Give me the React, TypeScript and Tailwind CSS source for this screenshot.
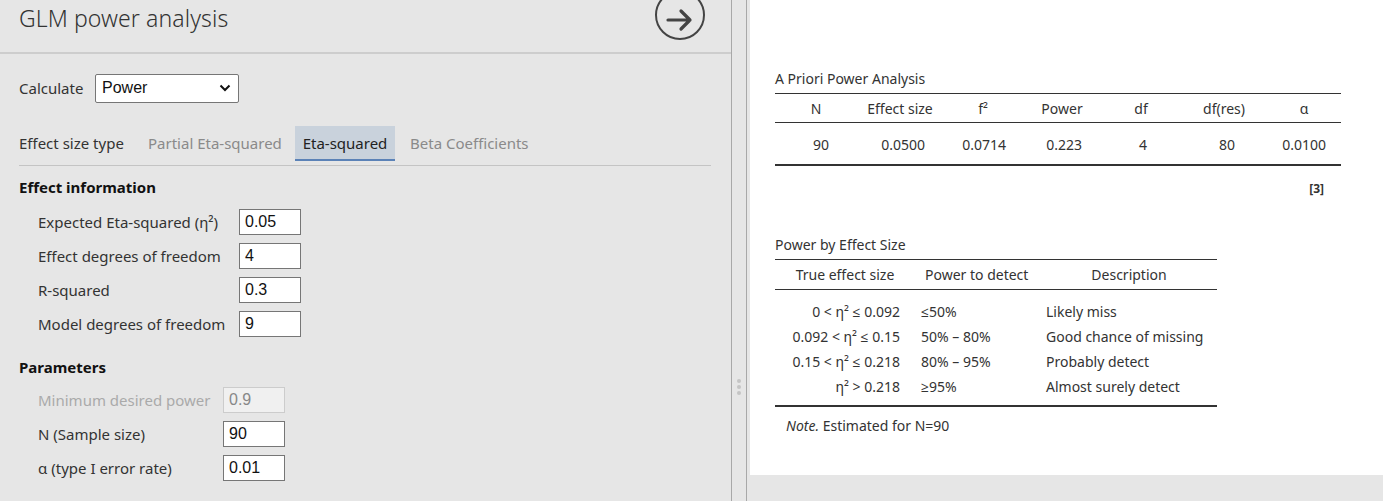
import React from "react";

const ui = { fontFamily: '"Noto Sans", "Open Sans", sans-serif' };
const arial = { fontFamily: '"Liberation Sans", Arial, sans-serif' };

function Field({ label, value, inputLeft, disabled }: { label: string; value: string; inputLeft: number; disabled?: boolean }) {
  return (
    <div className="flex items-center h-[34px] pl-[38px]">
      <div className={`text-[15px] ${disabled ? "text-[#aaaaaa]" : "text-[#333333]"}`} style={{ width: inputLeft - 38 }}>
        {label}
      </div>
      <div
        className={`w-[62px] h-[26px] border pl-[5px] text-[16px] leading-[24px] ${disabled ? "bg-[#f0f0f0] border-[#cccccc] text-[#888888]" : "bg-white border-[#767676] text-[#111111]"}`}
        style={arial}
      >
        {value}
      </div>
    </div>
  );
}

export default function App() {
  const headers = ["N", "Effect size", "f²", "Power", "df", "df(res)", "α"];
  const vals = ["90", "0.0500", "0.0714", "0.223", "4", "80", "0.0100"];
  const colW = [82, 86, 80, 78, 80, 86, 74];
  const valPad = [28, 18, 17, 19, 34, 32, 15];
  const rows = [
    ["0 < η² ≤ 0.092", "≤50%", "Likely miss"],
    ["0.092 < η² ≤ 0.15", "50% – 80%", "Good chance of missing"],
    ["0.15 < η² ≤ 0.218", "80% – 95%", "Probably detect"],
    ["η² > 0.218", "≥95%", "Almost surely detect"],
  ];
  return (
    <div className="flex w-[1383px] h-[501px] bg-[#e6e6e6] overflow-hidden" style={ui}>
      {/* Left options panel */}
      <div className="w-[732px] h-full border-r border-[#a8a8a8] flex flex-col shrink-0">
        <div className="relative h-[54px] border-b-2 border-[#cdcdcd] flex items-start">
          <div className="pl-[19px] pt-[1px] text-[23px] text-[#333333] font-light tracking-[0.1px]">GLM power analysis</div>
          <div className="absolute left-[655px] top-[-10px] w-[50px] h-[50px] rounded-full border-[2.5px] border-[#444444] flex items-center justify-center">
            <svg width="30" height="24" viewBox="0 0 30 24" className="mt-[9px]">
              <path d="M3 12 H25 M16 3 L25 12 L16 21" fill="none" stroke="#444444" strokeWidth="3.2" strokeLinecap="round" strokeLinejoin="round" />
            </svg>
          </div>
        </div>
        <div className="flex items-center pl-[19px] mt-[20px] h-[28px]">
          <span className="text-[15px] text-[#333333] w-[76px]">Calculate</span>
          <div className="w-[144px] h-[29px] bg-white border border-[#767676] rounded-[2px] flex items-center justify-between pl-[6px] pr-[7px]">
            <span className="text-[16px] text-[#111111]" style={arial}>Power</span>
            <svg width="12" height="8" viewBox="0 0 12 8"><path d="M1.5 1.5 L6 6 L10.5 1.5" fill="none" stroke="#111" strokeWidth="2" /></svg>
          </div>
        </div>
        <div className="ml-[19px] mr-[20px] mt-[24px] flex items-start h-[40px] border-b border-[#c4c4c4]">
          <div className="h-[35px] text-[15px] text-[#333333] flex items-center w-[129px]">Effect size type</div>
          <div className="h-[35px] text-[15px] text-[#8a8a8a] flex items-center w-[147px]">Partial Eta-squared</div>
          <div className="h-[35px] pt-[2px] text-[15px] text-[#222222] flex items-center justify-center w-[100px] bg-[#c9d2dc] border-b-2 border-[#5b82b7]">Eta-squared</div>
          <div className="h-[35px] text-[15px] text-[#8a8a8a] flex items-center pl-[15px]">Beta Coefficients</div>
        </div>
        <div className="pl-[19px] mt-[11px] text-[15px] font-bold text-[#111111] h-[20px] leading-[20px]">Effect information</div>
        <div className="mt-[8px]">
          <Field label="Expected Eta-squared (η²)" value="0.05" inputLeft={239} />
          <Field label="Effect degrees of freedom" value="4" inputLeft={239} />
          <Field label="R-squared" value="0.3" inputLeft={239} />
          <Field label="Model degrees of freedom" value="9" inputLeft={239} />
        </div>
        <div className="pl-[19px] mt-[16px] text-[15px] font-bold text-[#111111] h-[20px] leading-[20px]">Parameters</div>
        <div className="mt-[6px]">
          <Field label="Minimum desired power" value="0.9" inputLeft={223} disabled />
          <Field label="N (Sample size)" value="90" inputLeft={223} />
          <Field label="α (type I error rate)" value="0.01" inputLeft={223} />
        </div>
      </div>
      {/* Splitter */}
      <div className="w-[15px] h-full border-r border-[#a8a8a8] flex flex-col items-center gap-[2px] pt-[379px] shrink-0">
        <div className="w-[4px] h-[4px] rounded-full bg-[#c4c4c4]" />
        <div className="w-[4px] h-[4px] rounded-full bg-[#c4c4c4]" />
        <div className="w-[4px] h-[4px] rounded-full bg-[#c4c4c4]" />
      </div>
      {/* Results */}
      <div className="pl-[3px] flex-1">
        <div className="bg-white h-[475px] pl-[25px] pt-[69px] text-[#333333] text-[14px]">
          <div className="h-[20px] leading-[20px]">A Priori Power Analysis</div>
          <div className="w-[566px] mt-[4px] border-t border-[#333333]">
            <div className="flex h-[29px] items-center border-b border-[#333333]">
              {headers.map((h, i) => (
                <div key={h} className="text-center" style={{ width: colW[i] }}>{h}</div>
              ))}
            </div>
            <div className="flex h-[43px] pt-[1px] items-center border-b-2 border-[#333333]">
              {vals.map((v, i) => (
                <div key={i} className="text-right" style={{ width: colW[i], paddingRight: valPad[i] }}>{v}</div>
              ))}
            </div>
          </div>
          <div className="w-[566px] flex justify-end pr-[17px] mt-[14px] text-[12px] font-bold text-[#333333]">[3]</div>
          <div className="h-[20px] leading-[20px] mt-[37px]">Power by Effect Size</div>
          <div className="w-[442px] mt-[4px] border-t border-[#333333]">
            <div className="flex h-[30px] items-center border-b border-[#333333]">
              <div className="w-[140px] text-center">True effect size</div>
              <div className="w-[133px] pl-[10px]">Power to detect</div>
              <div className="w-[162px] text-center">Description</div>
            </div>
            <div className="pt-[9px] pb-[6px] border-b-2 border-[#333333]">
              {rows.map((r) => (
                <div key={r[0]} className="flex h-[25px] items-center">
                  <div className="w-[125px] text-right">{r[0]}</div>
                  <div className="w-[146px] pl-[21px]">{r[1]}</div>
                  <div>{r[2]}</div>
                </div>
              ))}
            </div>
          </div>
          <div className="mt-[8px] pl-[11px]"><i>Note.</i> Estimated for N=90</div>
        </div>
      </div>
    </div>
  );
}
